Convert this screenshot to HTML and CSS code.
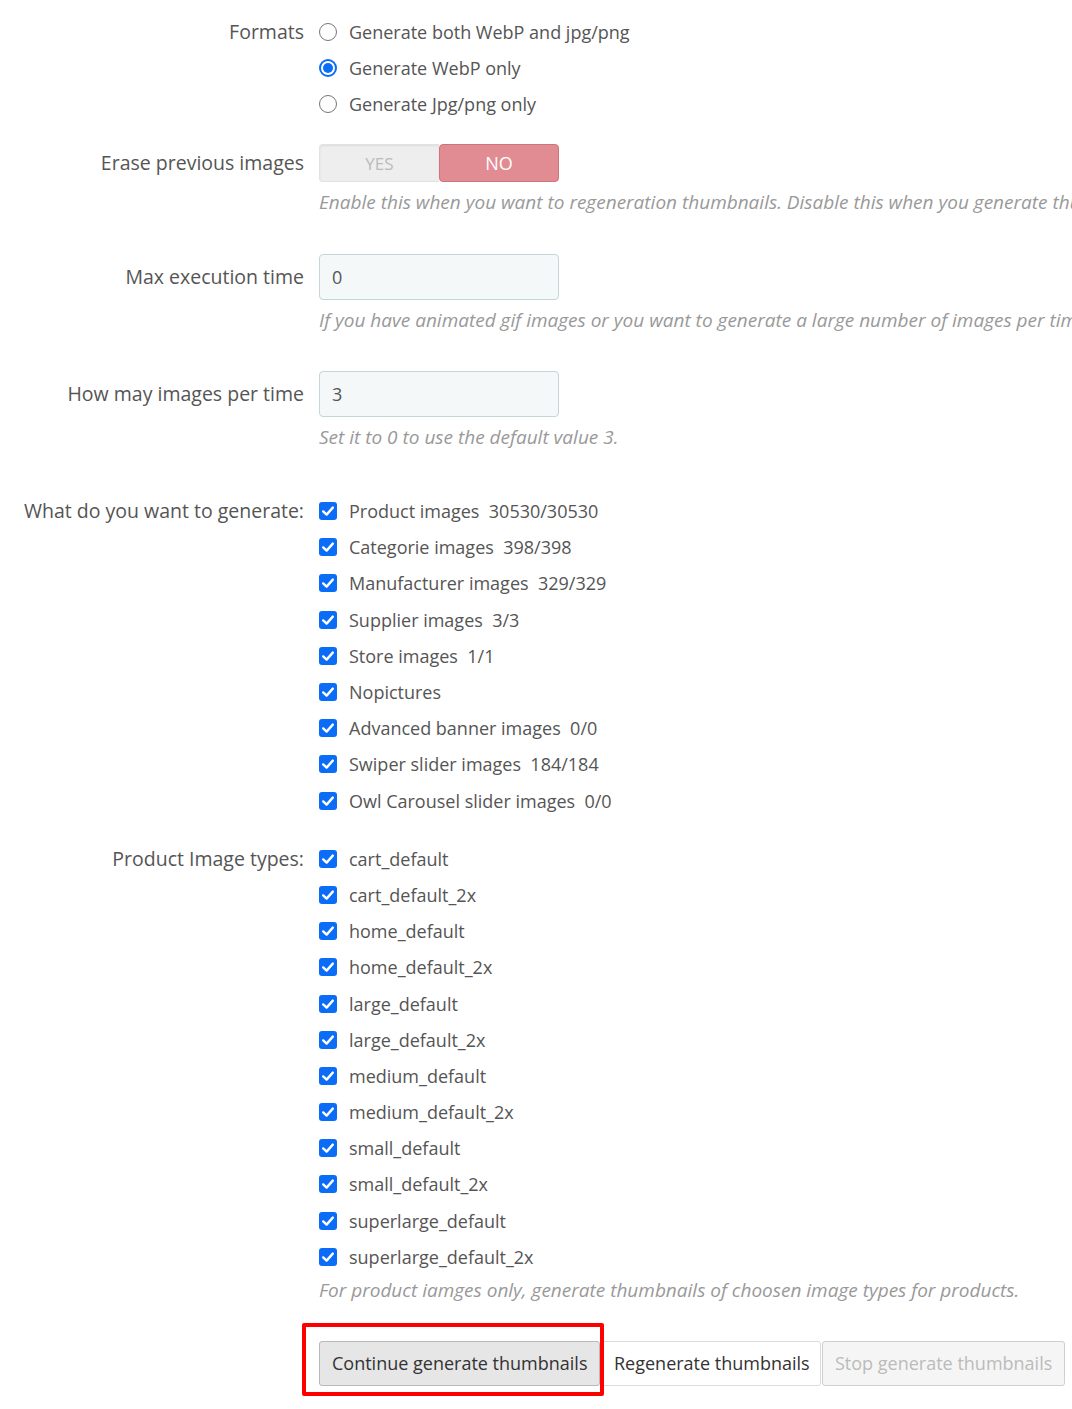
FILE: index.html
```html
<!DOCTYPE html>
<html>
<head>
<meta charset="utf-8">
<link rel="stylesheet" href="styles.css">
</head>
<body>
<svg width="0" height="0" class="defs">
  <defs>
    <symbol id="chk" viewBox="0 0 18 18">
      <rect x="0" y="0" width="18" height="18" rx="3" fill="#0b6cf7"/>
      <path d="M4.2 9.4 L7.6 12.6 L13.8 5.6" fill="none" stroke="#fff" stroke-width="2.4" stroke-linecap="round" stroke-linejoin="round"/>
    </symbol>
  </defs>
</svg>
<form class="form">
  <div class="row row-formats">
    <label class="lbl l36">Formats</label>
    <div class="ctrl">
      <div class="opt"><span class="radio"></span>Generate both WebP and jpg/png</div>
      <div class="opt"><span class="radio on"></span>Generate WebP only</div>
      <div class="opt"><span class="radio"></span>Generate Jpg/png only</div>
    </div>
  </div>

  <div class="row row-erase">
    <label class="lbl l38">Erase previous images</label>
    <div class="ctrl">
      <div class="toggle"><span class="yes">YES</span><span class="no">NO</span></div>
      <p class="help h-after-toggle">Enable this when you want to regeneration thumbnails. Disable this when you generate thumbnails for new images only.</p>
    </div>
  </div>

  <div class="row row-max">
    <label class="lbl l45">Max execution time</label>
    <div class="ctrl">
      <div class="input">0</div>
      <p class="help h-after-input">If you have animated gif images or you want to generate a large number of images per time, increase this value.</p>
    </div>
  </div>

  <div class="row row-how">
    <label class="lbl l45">How may images per time</label>
    <div class="ctrl">
      <div class="input">3</div>
      <p class="help h-after-input">Set it to 0 to use the default value 3.</p>
    </div>
  </div>

  <div class="row row-what">
    <label class="lbl l36">What do you want to generate:</label>
    <div class="ctrl">
      <div class="opt"><svg class="cb"><use href="#chk"/></svg>Product images&nbsp; 30530/30530</div>
      <div class="opt"><svg class="cb"><use href="#chk"/></svg>Categorie images&nbsp; 398/398</div>
      <div class="opt"><svg class="cb"><use href="#chk"/></svg>Manufacturer images&nbsp; 329/329</div>
      <div class="opt"><svg class="cb"><use href="#chk"/></svg>Supplier images&nbsp; 3/3</div>
      <div class="opt"><svg class="cb"><use href="#chk"/></svg>Store images&nbsp; 1/1</div>
      <div class="opt"><svg class="cb"><use href="#chk"/></svg>Nopictures</div>
      <div class="opt"><svg class="cb"><use href="#chk"/></svg>Advanced banner images&nbsp; 0/0</div>
      <div class="opt"><svg class="cb"><use href="#chk"/></svg>Swiper slider images&nbsp; 184/184</div>
      <div class="opt"><svg class="cb"><use href="#chk"/></svg>Owl Carousel slider images&nbsp; 0/0</div>
    </div>
  </div>

  <div class="row row-types">
    <label class="lbl l36">Product Image types:</label>
    <div class="ctrl">
      <div class="opt"><svg class="cb"><use href="#chk"/></svg>cart_default</div>
      <div class="opt"><svg class="cb"><use href="#chk"/></svg>cart_default_2x</div>
      <div class="opt"><svg class="cb"><use href="#chk"/></svg>home_default</div>
      <div class="opt"><svg class="cb"><use href="#chk"/></svg>home_default_2x</div>
      <div class="opt"><svg class="cb"><use href="#chk"/></svg>large_default</div>
      <div class="opt"><svg class="cb"><use href="#chk"/></svg>large_default_2x</div>
      <div class="opt"><svg class="cb"><use href="#chk"/></svg>medium_default</div>
      <div class="opt"><svg class="cb"><use href="#chk"/></svg>medium_default_2x</div>
      <div class="opt"><svg class="cb"><use href="#chk"/></svg>small_default</div>
      <div class="opt"><svg class="cb"><use href="#chk"/></svg>small_default_2x</div>
      <div class="opt"><svg class="cb"><use href="#chk"/></svg>superlarge_default</div>
      <div class="opt"><svg class="cb"><use href="#chk"/></svg>superlarge_default_2x</div>
      <p class="help h-after-list">For product iamges only, generate thumbnails of choosen image types for products.</p>
    </div>
  </div>

  <div class="row row-buttons">
    <div class="lbl"></div>
    <div class="ctrl btns">
      <span class="highlight"></span>
      <button type="button" class="btn btn-continue">Continue generate thumbnails</button>
      <button type="button" class="btn btn-regen">Regenerate thumbnails</button>
      <button type="button" class="btn btn-stop">Stop generate thumbnails</button>
    </div>
  </div>
</form>
</body>
</html>
```
FILE: styles.css
```css
html {
  overflow: hidden;
  background: #fff;
}
body {
  margin: 0;
  padding: 0 0 40px 0;
  font-family: "Open Sans", "Noto Sans", sans-serif;
  font-size: 18px;
  color: #555;
  width: 1072px;
}
.defs { position: absolute; }

.row {
  display: flex;
  align-items: flex-start;
}
.lbl {
  flex: 0 0 304px;
  text-align: right;
  padding-right: 15px;
  box-sizing: content-box;
  white-space: nowrap;
  color: #555;
  font-size: 19.5px;
}
.l36 { line-height: 36px; }
.l38 { line-height: 38px; }
.l45 { line-height: 45px; }

.ctrl {
  flex: 1 1 auto;
  min-width: 0;
}

.row-formats { margin-top: 14px; }
.row-erase { margin-top: 22px; }
.row-max { margin-top: 39px; }
.row-how { margin-top: 38px; }
.row-what { margin-top: 43px; }
.row-types { margin-top: 22px; }
.row-buttons { margin-top: 38px; }

.opt {
  display: flex;
  align-items: center;
  height: 36.2px;
  line-height: 36px;
  white-space: nowrap;
  color: #555;
}
.row-formats .opt { height: 36px; }

.radio {
  flex: 0 0 auto;
  width: 18px;
  height: 18px;
  box-sizing: border-box;
  border: 1.5px solid #767676;
  border-radius: 50%;
  margin-right: 12px;
  position: relative;
}
.radio.on {
  border: 2px solid #0b6cf7;
}
.radio.on::after {
  content: "";
  position: absolute;
  left: 2px;
  top: 2px;
  width: 10px;
  height: 10px;
  border-radius: 50%;
  background: #0b6cf7;
}

.cb {
  flex: 0 0 auto;
  width: 18px;
  height: 18px;
  margin-right: 12px;
}

.toggle {
  display: flex;
  width: 240px;
  height: 38px;
}
.toggle span {
  flex: 1 1 50%;
  display: flex;
  align-items: center;
  justify-content: center;
  box-sizing: border-box;
}
.toggle .yes {
  background: #eeeeee;
  color: #bbbbbb;
  border: 1px solid #e2e2e2;
  border-right: none;
  border-radius: 4px 0 0 4px;
  box-shadow: inset 0 1px 2px rgba(0,0,0,0.08);
  font-size: 17px;
}
.toggle .no {
  background: #e08c92;
  color: #fff;
  border: 1px solid #d0737a;
  border-radius: 4px;
}

.input {
  width: 240px;
  height: 46px;
  box-sizing: border-box;
  background: #f5f8f9;
  border: 1px solid #c4d4d9;
  border-radius: 4px;
  padding-left: 12px;
  line-height: 44px;
  color: #555;
}

.help {
  margin: 0;
  font-style: italic;
  font-size: 19px;
  color: #999;
  line-height: 26px;
  white-space: nowrap;
}
.h-after-toggle { margin-top: 7px; }
.h-after-input { margin-top: 7px; }
.h-after-list { margin-top: 2px; }

.btns {
  display: flex;
  gap: 1px;
  position: relative;
}
.btn {
  font-family: inherit;
  font-size: 18px;
  height: 45px;
  box-sizing: border-box;
  padding: 0 12px;
  border-radius: 3px;
  cursor: pointer;
  white-space: nowrap;
}
.btn-continue {
  background: #e6e6e6;
  border: 1px solid #b9b9b9;
  color: #333;
  width: 281px;
}
.btn-regen {
  background: #fff;
  border: 1px solid #dcdcdc;
  color: #333;
  width: 220px;
}
.btn-stop {
  background: #f5f5f5;
  border: 1px solid #cfcfcf;
  color: #bbb;
  width: 243px;
}
.highlight {
  position: absolute;
  left: -17px;
  top: -18px;
  width: 302px;
  height: 73px;
  box-sizing: border-box;
  border: 4px solid #ff0000;
  border-radius: 2px;
  pointer-events: none;
  z-index: 2;
}
```
